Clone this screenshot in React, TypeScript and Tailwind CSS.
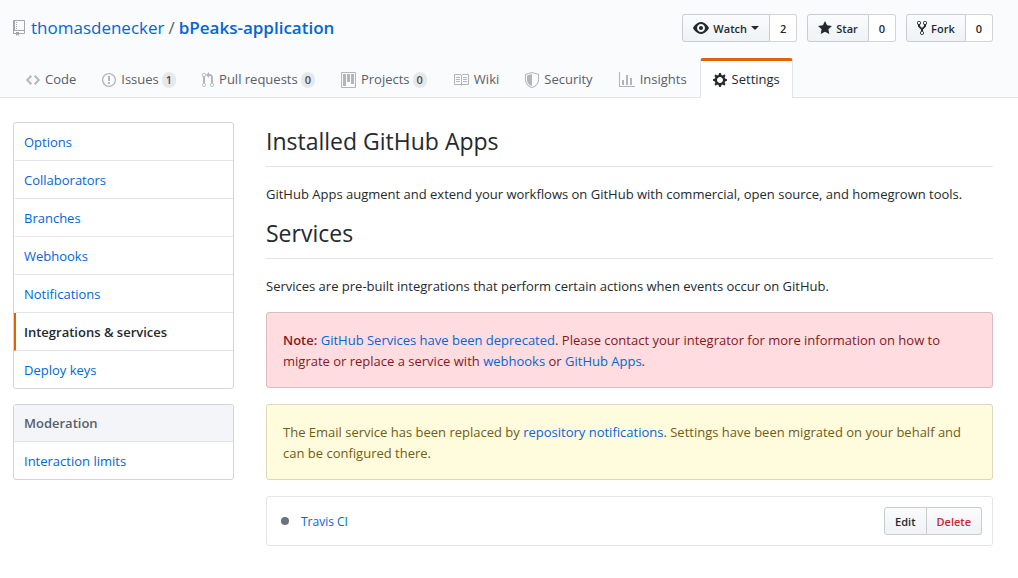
import type { ReactNode } from "react";

type IconShape = { width: number; path: string };

const icons = {
  repo: {
    width: 12,
    path: "M4 9H3V8h1v1zm0-3H3v1h1V6zm0-2H3v1h1V4zm0-2H3v1h1V2zm8-1v12c0 .55-.45 1-1 1H6v2l-1.5-1.5L3 16v-2H1c-.55 0-1-.45-1-1V1c0-.55.45-1 1-1h10c.55 0 1 .45 1 1zm-1 10H1v2h2v-1h3v1h5v-2zm0-10H2v9h9V1z",
  },
  code: {
    width: 14,
    path: "M9.5 3L8 4.5 11.5 8 8 11.5 9.5 13 14 8 9.5 3zm-5 0L0 8l4.5 5L6 11.5 2.5 8 6 4.5 4.5 3z",
  },
  issue: {
    width: 14,
    path: "M7 2.3c3.14 0 5.7 2.56 5.7 5.7s-2.56 5.7-5.7 5.7A5.71 5.71 0 0 1 1.3 8c0-3.14 2.56-5.7 5.7-5.7zM7 1C3.14 1 0 4.14 0 8s3.14 7 7 7 7-3.14 7-7-3.14-7-7-7zm1 3H6v5h2V4zm0 6H6v2h2v-2z",
  },
  pull: {
    width: 12,
    path: "M11 11.28V5c-.03-.78-.34-1.47-.94-2.06C9.46 2.35 8.78 2.03 8 2H7V0L4 3l3 3V4h1c.27.02.48.11.69.31.21.2.3.42.31.69v6.28A1.993 1.993 0 0 0 10 15a1.993 1.993 0 0 0 1-3.72zm-1 2.92c-.66 0-1.2-.55-1.2-1.2 0-.65.55-1.2 1.2-1.2.65 0 1.2.55 1.2 1.2 0 .65-.55 1.2-1.2 1.2zM4 3c0-1.11-.89-2-2-2a1.993 1.993 0 0 0-1 3.72v6.56A1.993 1.993 0 0 0 2 15a1.993 1.993 0 0 0 1-3.72V4.72c.59-.34 1-.98 1-1.72zm-.8 10c0 .66-.55 1.2-1.2 1.2-.65 0-1.2-.55-1.2-1.2 0-.65.55-1.2 1.2-1.2.65 0 1.2.55 1.2 1.2zM2 4.2C1.34 4.2.8 3.65.8 3c0-.65.55-1.2 1.2-1.2.65 0 1.2.55 1.2 1.2 0 .65-.55 1.2-1.2 1.2z",
  },
  project: {
    width: 15,
    path: "M10 12h3V2h-3v10zm-4-2h3V2H6v8zm-4 4h3V2H2v12zm-1 1h13V1H1v14zM14 0H1a1 1 0 0 0-1 1v14a1 1 0 0 0 1 1h13a1 1 0 0 0 1-1V1a1 1 0 0 0-1-1z",
  },
  book: {
    width: 16,
    path: "M3 5h4v1H3V5zm0 3h4V7H3v1zm0 2h4V9H3v1zm11-5h-4v1h4V5zm0 2h-4v1h4V7zm0 2h-4v1h4V9zm2-6v9c0 .55-.45 1-1 1H9.5l-1 1-1-1H2c-.55 0-1-.45-1-1V3c0-.55.45-1 1-1h5.5l1 1 1-1H15c.55 0 1 .45 1 1zm-8 .5L7.5 3H2v9h6V3.5zm7-.5H9.5l-.5.5V12h6V3z",
  },
  shield: {
    width: 14,
    path: "M0 2l7-2 7 2v6.02C14 12.69 8.69 16 7 16c-1.69 0-7-3.31-7-7.98V2zm1 .75L7 1l6 1.75v5.268C13 12.104 8.449 15 7 15c-1.449 0-6-2.896-6-6.982V2.75zm1 .75L7 2v12c-1.207 0-5-2.482-5-5.985V3.5z",
  },
  graph: {
    width: 16,
    path: "M16 14v1H0V0h1v14h15zM5 13H3V8h2v5zm4 0H7V3h2v10zm4 0h-2V6h2v7z",
  },
  gear: {
    width: 14,
    path: "M14 8.77v-1.6l-1.94-.64-.45-1.09.88-1.84-1.13-1.13-1.81.91-1.09-.45-.69-1.92h-1.6l-.63 1.94-1.11.45-1.84-.88-1.13 1.13.91 1.81-.45 1.09L0 7.23v1.59l1.94.64.45 1.09-.88 1.84 1.13 1.13 1.81-.91 1.09.45.69 1.92h1.59l.63-1.94 1.11-.45 1.84.88 1.13-1.13-.92-1.81.47-1.09L14 8.75v.02zM7 11c-1.66 0-3-1.34-3-3s1.34-3 3-3 3 1.34 3 3-1.34 3-3 3z",
  },
  eye: {
    width: 16,
    path: "M8.06 2C3 2 0 8 0 8s3 6 8.06 6C13 14 16 8 16 8s-3-6-7.94-6zM8 12c-2.2 0-4-1.78-4-4 0-2.2 1.8-4 4-4 2.22 0 4 1.8 4 4 0 2.22-1.78 4-4 4zm2-4c0 1.11-.89 2-2 2-1.11 0-2-.89-2-2 0-1.11.89-2 2-2 1.11 0 2 .89 2 2z",
  },
  star: {
    width: 14,
    path: "M14 6l-4.9-.64L7 1 4.9 5.36 0 6l3.6 3.26L2.67 14 7 11.67 11.33 14l-.93-4.74L14 6z",
  },
  fork: {
    width: 10,
    path: "M8 1a1.993 1.993 0 0 0-1 3.72V6L5 8 3 6V4.72A1.993 1.993 0 0 0 2 1a1.993 1.993 0 0 0-1 3.72V6.5l3 3v1.78A1.993 1.993 0 0 0 5 15a1.993 1.993 0 0 0 1-3.72V9.5l3-3V4.72A1.993 1.993 0 0 0 8 1zM2 4.2C1.34 4.2.8 3.65.8 3c0-.65.55-1.2 1.2-1.2.65 0 1.2.55 1.2 1.2 0 .65-.55 1.2-1.2 1.2zm3 10c-.66 0-1.2-.55-1.2-1.2 0-.65.55-1.2 1.2-1.2.65 0 1.2.55 1.2 1.2 0 .65-.55 1.2-1.2 1.2zm3-10c-.66 0-1.2-.55-1.2-1.2 0-.65.55-1.2 1.2-1.2.65 0 1.2.55 1.2 1.2 0 .65-.55 1.2-1.2 1.2z",
  },
} satisfies Record<string, IconShape>;

type IconName = keyof typeof icons;

function Icon({ name, className = "" }: { name: IconName; className?: string }) {
  const { width, path } = icons[name];
  return (
    <svg
      aria-hidden="true"
      width={width}
      height={16}
      viewBox={`0 0 ${width} 16`}
      fill="currentColor"
      className={`shrink-0 ${className}`}
    >
      <path fillRule="evenodd" d={path} />
    </svg>
  );
}

function TextLink({ children }: { children: ReactNode }) {
  return (
    <a href="#" className="text-[#0366d6] hover:underline">
      {children}
    </a>
  );
}

function SocialButton({
  icon,
  label,
  count,
  caret = false,
}: {
  icon: IconName;
  label: string;
  count: number;
  caret?: boolean;
}) {
  return (
    <li className="flex h-7 text-[11px] font-semibold text-[#24292e]">
      <button
        type="button"
        className="flex items-center gap-1 rounded-l-[3px] border border-[#c9cccf] bg-linear-to-b from-[#fafbfc] to-[#eff3f6] px-[10px]"
      >
        <Icon name={icon} />
        {label}
        {caret && (
          <span className="border-x-4 border-t-4 border-x-transparent border-t-current" />
        )}
      </button>
      <a
        href="#"
        className="flex items-center rounded-r-[3px] border border-l-0 border-[#d1d3d5] bg-white px-[10px]"
      >
        {count}
      </a>
    </li>
  );
}

const tabs: { icon: IconName; label: string; count?: number }[] = [
  { icon: "code", label: "Code" },
  { icon: "issue", label: "Issues", count: 1 },
  { icon: "pull", label: "Pull requests", count: 0 },
  { icon: "project", label: "Projects", count: 0 },
  { icon: "book", label: "Wiki" },
  { icon: "shield", label: "Security" },
  { icon: "graph", label: "Insights" },
  { icon: "gear", label: "Settings" },
];

function Tab({ icon, label, count }: (typeof tabs)[number]) {
  const selected = label === "Settings";
  return (
    <a
      href="#"
      aria-current={selected ? "page" : undefined}
      className={`flex h-10 items-center rounded-t-[3px] border-x border-t-3 px-3 ${
        selected
          ? "border-x-[#e1e4e8] border-t-[#e36209] bg-white text-[#24292e]"
          : "border-transparent text-[#586069]"
      }`}
    >
      <Icon name={icon} className={selected ? "mr-[5px]" : "mr-[5px] text-[#b3b6b9]"} />
      {label}
      {count !== undefined && (
        <span className="ml-[3px] flex h-4 items-center rounded-full bg-[#e6e8ea] px-1 text-[11px] font-semibold text-[#444d56]">
          {count}
        </span>
      )}
    </a>
  );
}

const menu = [
  "Options",
  "Collaborators",
  "Branches",
  "Webhooks",
  "Notifications",
  "Integrations & services",
  "Deploy keys",
];

function MenuItem({ label }: { label: string }) {
  const selected = label === "Integrations & services";
  return (
    <a
      href="#"
      className={`block border-l-2 px-2 pt-[9px] pb-[7px] ${
        selected
          ? "border-l-[#e36209] font-semibold text-[#24292e]"
          : "border-l-transparent text-[#0366d6]"
      }`}
    >
      {label}
    </a>
  );
}

function SectionHeading({ children }: { children: ReactNode }) {
  return (
    <h2 className="mb-[17px] border-b border-[#e1e4e8] pt-px pb-[7px] text-[23px] leading-9">
      {children}
    </h2>
  );
}

export default function App() {
  return (
    <div className="bg-white font-['Open_Sans','Noto_Sans',sans-serif] text-[13px] leading-[21px] text-[#24292e]">
      <header className="border-b border-[#e1e4e8] bg-[#fafbfc] pt-[14px] pr-[25px] pl-[13px]">
        <div className="flex items-start justify-between">
          <h1 className="flex items-center text-[17px] leading-7 text-[#586069]">
            <Icon name="repo" className="mr-[6px] text-[#a3a7ab]" />
            <TextLink>thomasdenecker</TextLink>
            <span className="mx-1">/</span>
            <strong className="font-semibold">
              <TextLink>bPeaks-application</TextLink>
            </strong>
          </h1>
          <ul className="flex gap-[10px]">
            <SocialButton icon="eye" label="Watch" count={2} caret />
            <SocialButton icon="star" label="Star" count={0} />
            <SocialButton icon="fork" label="Fork" count={0} />
          </ul>
        </div>
        <nav className="mt-4 -mb-px flex">
          {tabs.map((tab) => (
            <Tab key={tab.label} {...tab} />
          ))}
        </nav>
      </header>

      <div className="flex items-start gap-8 pt-6 pr-[25px] pb-8 pl-[13px]">
        <aside className="flex w-[221px] shrink-0 flex-col gap-[15px]">
          <nav className="divide-y divide-[#e1e4e8] overflow-hidden rounded-[3px] border border-[#d1d5da]">
            {menu.map((label) => (
              <MenuItem key={label} label={label} />
            ))}
          </nav>
          <nav className="divide-y divide-[#e1e4e8] overflow-hidden rounded-[3px] border border-[#d1d5da]">
            <h3 className="bg-[#f3f5f8] px-[10px] py-2 leading-5 font-semibold text-[#586069]">
              Moderation
            </h3>
            <MenuItem label="Interaction limits" />
          </nav>
        </aside>

        <main className="min-w-0 flex-1">
          <SectionHeading>Installed GitHub Apps</SectionHeading>
          <p className="mb-[9px]">
            GitHub Apps augment and extend your workflows on GitHub with commercial, open source,
            and homegrown tools.
          </p>
          <SectionHeading>Services</SectionHeading>
          <p className="mb-[15px]">
            Services are pre-built integrations that perform certain actions when events occur on
            GitHub.
          </p>

          <div className="mb-4 rounded-[3px] border border-[#d9bcc1] bg-[#ffdce0] px-4 pt-[17px] pb-[15px] text-[#86181d]">
            <strong className="font-semibold">Note:</strong>{" "}
            <TextLink>GitHub Services have been deprecated</TextLink>. Please contact your
            integrator for more information on how to migrate or replace a service with{" "}
            <TextLink>webhooks</TextLink> or <TextLink>GitHub Apps</TextLink>.
          </div>

          <div className="mb-4 rounded-[3px] border border-[#dcd8b8] bg-[#fffbdd] px-4 pt-[17px] pb-[15px] text-[#735c0f]">
            The Email service has been replaced by <TextLink>repository notifications</TextLink>.
            Settings have been migrated on your behalf and can be configured there.
          </div>

          <div className="flex items-center rounded-[3px] border border-[#e5e5e5] p-[10px] text-[12px]">
            <span className="mr-3 ml-1 size-2 rounded-full bg-[#6a737d]" />
            <TextLink>Travis CI</TextLink>
            <div className="ml-auto flex h-7 text-[11px] font-semibold">
              <button
                type="button"
                className="rounded-l-[3px] border border-[#c9cccf] bg-linear-to-b from-[#fafbfc] to-[#eff3f6] px-[10px]"
              >
                Edit
              </button>
              <button
                type="button"
                className="rounded-r-[3px] border border-l-0 border-[#c9cccf] bg-linear-to-b from-[#fafbfc] to-[#eff3f6] px-[10px] text-[#cb2431]"
              >
                Delete
              </button>
            </div>
          </div>
        </main>
      </div>
    </div>
  );
}
